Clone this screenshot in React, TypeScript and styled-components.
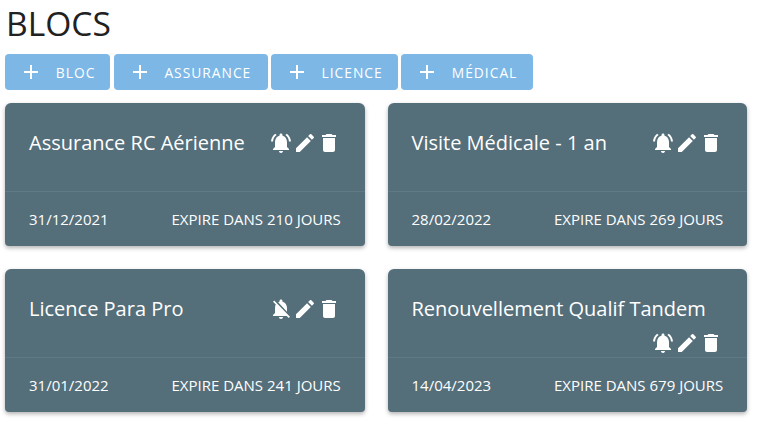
import React from "react";
import styled, { createGlobalStyle } from "styled-components";

const Global = createGlobalStyle`
  html, body { margin: 0; padding: 0; background: #fff; }
  body { font-family: "Open Sans", "Liberation Sans", sans-serif; }
`;

const Page = styled.main`
  width: 759px;
  height: 424px;
  box-sizing: border-box;
  padding: 0 11px 0 5px;
  overflow: hidden;
`;

const Title = styled.h1`
  margin: 0;
  padding-top: 1px;
  height: 54px;
  box-sizing: border-box;
  font-size: 33.6px;
  line-height: 44px;
  font-weight: 400;
  color: #212121;
  padding-left: 1px;
`;

const Toolbar = styled.div`
  display: flex;
  gap: 3.2px;
  margin-bottom: 13px;
`;

const ActionButton = styled.button<{ $width: number }>`
  width: ${(p) => p.$width}px;
  height: 36px;
  display: flex;
  align-items: center;
  gap: 12.8px;
  padding: 0 0 0 14px;
  border: 0;
  border-radius: 4px;
  background: #7cb7e6;
  color: #fff;
  font-family: inherit;
  font-size: 13.8px;
  font-weight: 500;
  letter-spacing: 1px;
  white-space: nowrap;
`;

const Grid = styled.div`
  display: grid;
  grid-template-columns: 359.75px 359.75px;
  column-gap: 22.75px;
  row-gap: 23px;
`;

const Card = styled.article`
  height: 143px;
  background: #546e7a;
  border-radius: 6px 6px 4px 4px;
  color: #fff;
  box-shadow: 0 2px 4px rgba(0, 0, 0, 0.3);
`;

const CardHead = styled.div`
  height: 89px;
  box-sizing: border-box;
  padding: 28px 24px 0;
  display: flex;
  flex-wrap: wrap;
  justify-content: space-between;
  align-content: flex-start;
  row-gap: 10px;
  border-bottom: 1px solid rgba(255, 255, 255, 0.08);
`;

const CardTitle = styled.h2`
  margin: 0;
  font-size: 20px;
  line-height: 24px;
  font-weight: 400;
`;

const Icons = styled.div`
  display: flex;
  margin-left: auto;
`;

const CardFoot = styled.div`
  height: 54px;
  box-sizing: border-box;
  padding: 0 24px;
  display: flex;
  align-items: center;
  justify-content: space-between;
  font-size: 15px;
`;

const Glyph = styled.svg`
  display: block;
  width: 24px;
  height: 24px;
  fill: currentColor;
`;

const ADD = "M19 13h-6v6h-2v-6H5v-2h6V5h2v6h6v2z";
const BELL =
  "M7.58 4.08 6.15 2.65C3.75 4.48 2.17 7.3 2.03 10.5h2c.15-2.65 1.51-4.97 3.55-6.42zm12.39 6.42h2c-.15-3.2-1.73-6.02-4.12-7.85l-1.42 1.43c2.02 1.45 3.39 3.77 3.54 6.42zM18 11c0-3.07-1.64-5.64-4.5-6.32V4c0-.83-.67-1.5-1.5-1.5s-1.5.67-1.5 1.5v.68C7.63 5.36 6 7.92 6 11v5l-2 2v1h16v-1l-2-2v-5zm-6 11c.14 0 .27-.01.4-.04.65-.14 1.18-.58 1.44-1.18.1-.24.15-.5.15-.78h-4c.01 1.1.9 2 2.01 2z";
const BELL_OFF =
  "M20 18.69 7.84 6.14 5.27 3.49 4 4.76l2.8 2.8v.01c-.52.99-.8 2.16-.8 3.42v5l-2 2v1h13.73l2 2L21 19.72l-1-1.03zM12 22c1.11 0 2-.89 2-2h-4c0 1.11.89 2 2 2zm6-7.32V11c0-3.08-1.64-5.64-4.5-6.32V4c0-.83-.67-1.5-1.5-1.5s-1.5.67-1.5 1.5v.68c-.15.03-.29.08-.42.12-.1.03-.2.07-.3.11h-.01c-.2.08-.4.17-.59.27-.01.01-.02.01-.03.01L18 14.68z";
const EDIT =
  "M3 17.25V21h3.75L17.81 9.94l-3.75-3.75L3 17.25zM20.71 7.04c.39-.39.39-1.02 0-1.41l-2.34-2.34a.9959.9959 0 0 0-1.41 0l-1.83 1.83 3.75 3.75 1.83-1.83z";
const TRASH =
  "M6 19c0 1.1.9 2 2 2h8c1.1 0 2-.9 2-2V7H6v12zM19 4h-3.5l-1-1h-5l-1 1H5v2h14V4z";

const Icon = ({ d }: { d: string }) => (
  <Glyph viewBox="0 0 24 24" aria-hidden="true">
    <path d={d} />
  </Glyph>
);

const buttons = [
  { label: "BLOC", width: 105.4 },
  { label: "ASSURANCE", width: 154 },
  { label: "LICENCE", width: 127 },
  { label: "MÉDICAL", width: 132 },
];

const cards = [
  { title: "Assurance RC Aérienne", date: "31/12/2021", days: 210, muted: false },
  { title: "Visite Médicale - 1 an", date: "28/02/2022", days: 269, muted: false },
  { title: "Licence Para Pro", date: "31/01/2022", days: 241, muted: true },
  { title: "Renouvellement Qualif Tandem", date: "14/04/2023", days: 679, muted: false },
];

export default function App() {
  return (
    <Page>
      <Global />
      <Title>BLOCS</Title>
      <Toolbar>
        {buttons.map((b) => (
          <ActionButton key={b.label} $width={b.width}>
            <Icon d={ADD} />
            {b.label}
          </ActionButton>
        ))}
      </Toolbar>
      <Grid>
        {cards.map((c) => (
          <Card key={c.title}>
            <CardHead>
              <CardTitle>{c.title}</CardTitle>
              <Icons>
                <Icon d={c.muted ? BELL_OFF : BELL} />
                <Icon d={EDIT} />
                <Icon d={TRASH} />
              </Icons>
            </CardHead>
            <CardFoot>
              <span>{c.date}</span>
              <span>EXPIRE DANS {c.days} JOURS</span>
            </CardFoot>
          </Card>
        ))}
      </Grid>
    </Page>
  );
}
